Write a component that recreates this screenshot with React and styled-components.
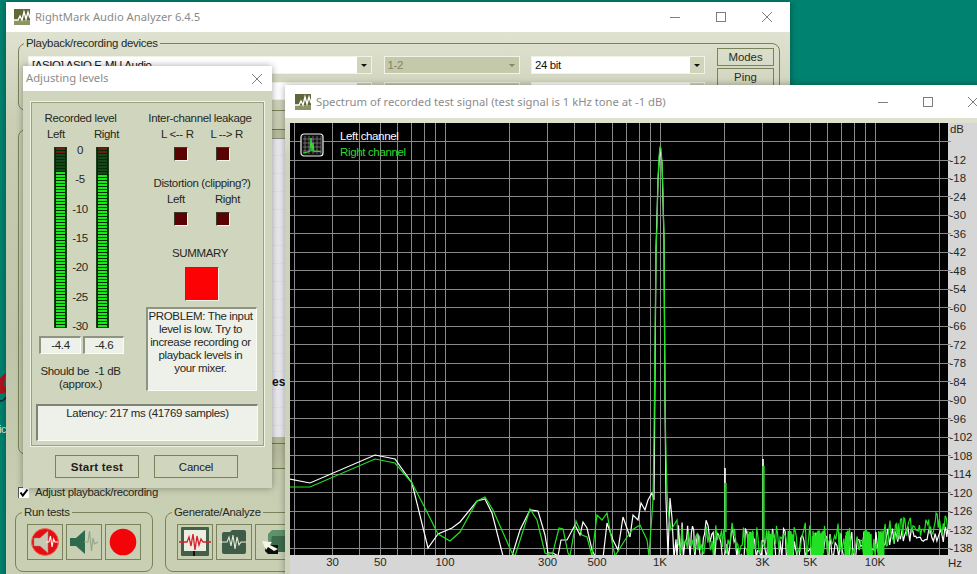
import React from "react";
import styled, { createGlobalStyle } from "styled-components";

const Global = createGlobalStyle`
  html, body { margin: 0; padding: 0; background: #008270; }
  #root { width: 977px; height: 574px; overflow: hidden; position: relative; }
  * { box-sizing: border-box; }
`;

const UI = `"Liberation Sans", Arial, sans-serif`;
const TITLE = `"Noto Sans", "Open Sans", sans-serif`;

const Desktop = styled.div`
  position: relative;
  width: 977px;
  height: 574px;
  overflow: hidden;
  background: #008270;
  font: 11.5px/13px ${UI};
  letter-spacing: -0.35px;
  color: #26281e;
`;

const DesktopGlyph = styled.svg`
  position: absolute;
  left: 0;
  top: 370px;
`;

const DesktopLabel = styled.span`
  position: absolute;
  left: -1px;
  top: 423px;
  color: #d9efe9;
  font: 11px/13px ${UI};
`;

const Window = styled.div`
  position: absolute;
  left: ${(p) => p.$x}px;
  top: ${(p) => p.$y}px;
  width: ${(p) => p.$w}px;
  height: ${(p) => p.$h}px;
  box-shadow: 0 0 7px rgba(0, 0, 0, 0.35);
  overflow: hidden;
`;

const TitleBar = styled.div`
  display: flex;
  align-items: center;
  height: ${(p) => p.$h}px;
  padding: 0 ${(p) => p.$right}px 0 ${(p) => p.$left}px;
  background: #fff;
  gap: 5px;
`;

const TitleText = styled.div`
  flex: 1;
  font: 11.25px/16px ${TITLE};
  letter-spacing: 0;
  color: #8b8b8b;
  white-space: nowrap;
  position: relative;
  top: ${(p) => p.$nudge || 0}px;
`;

const Controls = styled.div`
  display: flex;
  align-items: center;
  gap: ${(p) => p.$gap}px;
`;

const MainBody = styled.div`
  height: 570px;
  padding: 5px 0 0 12px;
  background: linear-gradient(180deg, #dfe2d0 0, #c9ceb4 90px, #bfc5a8 310px, #c9cfb3 480px, #c9cfb3 100%);
`;

const Group = styled.fieldset`
  margin: 0;
  padding: ${(p) => p.$pad || "0"};
  width: ${(p) => p.$w}px;
  height: ${(p) => p.$h}px;
  min-width: 0;
  border: 1px solid #7a8259;
  border-radius: 8px;
  flex: none;
`;

const GroupLegend = styled.legend`
  margin-left: ${(p) => p.$ml}px;
  padding: 0 2px;
  font: 11.4px/13px ${UI};
  letter-spacing: -0.27px;
  color: #26281e;
`;

const DeviceRow = styled.div`
  display: flex;
  padding-left: 9px;
`;

const ComboGrid = styled.div`
  display: grid;
  grid-template-columns: 344px 136px 174px;
  column-gap: 11.5px;
  row-gap: 8px;
  padding-top: 6px;
`;

const Combo = styled.div`
  display: flex;
  height: 18px;
  align-items: stretch;
  border: 1px solid #f1f3e6;
  background: ${(p) => (p.$disabled ? "#c3c9a9" : "#fff")};
  color: ${(p) => (p.$disabled ? "#7f8568" : "#111")};
  font: 11.4px/17px ${UI};
`;

const ComboText = styled.span`
  flex: 1;
  padding-left: 3px;
  white-space: nowrap;
  overflow: hidden;
`;

const ComboArrow = styled.span`
  width: 14px;
  background: ${(p) => (p.$disabled ? "#c3c9a9" : "#cfd4bb")};
  display: flex;
  align-items: center;
  justify-content: center;
  &::after {
    content: "";
    border-left: 3px solid transparent;
    border-right: 3px solid transparent;
    border-top: 3px solid ${(p) => (p.$disabled ? "#7f8568" : "#111")};
  }
`;

const SideButtons = styled.div`
  display: flex;
  flex-direction: column;
  gap: 2px;
  margin: -2px 0 0 12px;
  width: 57px;
`;

const SmallButton = styled.div`
  height: 18px;
  border: 1px solid #7a8259;
  text-align: center;
  font: 11.4px/16px ${UI};
  letter-spacing: 0;
  color: #2a2c20;
`;

const SecondRow = styled.div`
  display: flex;
  margin-top: 18px;
`;

const PlainGroup = styled.div`
  width: 250px;
  height: 326px;
  flex: none;
  border: 1px solid #7a8259;
  border-radius: 8px;
`;

const RightPane = styled.div`
  flex: 1;
  height: 340px;
  border-top: 1px solid #6f7750;
  padding-top: 8px;
  background: linear-gradient(180deg, #b6bc9c 0, #b6bc9c 320px, #bfc5a6 100%);
`;

const ListBox = styled.div`
  height: 299px;
  padding: 237px 0 0 4px;
  background: repeating-linear-gradient(180deg, #e9e9ee 0, #e9e9ee 17px, #dcdce0 18px);
  font: bold 12px/14px ${UI};
  letter-spacing: 0;
  color: #111;
  box-shadow: inset 0 17px 0 -16px #8e9080;
`;

const Rule = styled.div`
  height: 1px;
  margin-top: ${(p) => p.$top}px;
  background: #6f7750;
`;

const CheckRow = styled.label`
  display: flex;
  align-items: center;
  gap: 6px;
  margin-top: 17px;
  height: 13px;
  font: 11.4px/13px ${UI};
  letter-spacing: -0.3px;
`;

const CheckBox = styled.span`
  width: 11px;
  height: 11px;
  background: #fff;
  border-top: 1px solid #555;
  border-left: 1px solid #555;
  display: flex;
`;

const ToolRow = styled.div`
  display: flex;
  gap: 12px;
  margin: 7px 0 0 -3px;
`;

const IconRow = styled.div`
  display: flex;
  gap: 3px;
  padding: 5px 0 0 11px;
`;

const IconButton = styled.div`
  width: 36px;
  height: 36px;
  border: 1px solid #7a8259;
  display: flex;
  align-items: center;
  justify-content: center;
  flex: none;
`;

/* Adjusting levels */
const DialogBody = styled.div`
  height: 397px;
  padding: 10px 7px 0;
  background: #d0d6bd;
`;

const Frame = styled.div`
  height: 346px;
  border: 1px solid #f0f2e6;
  outline: 1px solid #98a080;
  outline-offset: -2px;
  padding-top: 10px;
`;

const Columns = styled.div`
  display: grid;
  grid-template-columns: 99px 1fr;
  height: 280px;
`;

const Col = styled.div`
  display: flex;
  flex-direction: column;
`;

const Center = styled.div`
  text-align: center;
  margin-top: ${(p) => p.$top || 0}px;
  margin-left: ${(p) => p.$ml || 0}px;
  white-space: nowrap;
`;

const TwoLabels = styled.div`
  display: flex;
  justify-content: space-between;
  margin-top: 3px;
  padding: 0 ${(p) => p.$r}px 0 ${(p) => p.$l}px;
  white-space: nowrap;
`;

const MeterRow = styled.div`
  display: flex;
  margin: 6px 0 0 23px;
  height: 181px;
`;

const Bar = styled.div`
  width: 13px;
  height: 181px;
  padding: 0 1px;
  background: #062806;
  display: flex;
  flex-direction: column;
  gap: 1px;
  border: 1px solid #1a3a1a;
  flex: none;
`;

const Segment = styled.i`
  display: block;
  height: 2px;
  flex: none;
  background: ${(p) => (p.$tone === "off-red" ? "#6a1f12" : p.$tone === "off" ? "#14481a" : "#14ee14")};
`;

const TickColumn = styled.div`
  width: 29px;
  height: 189px;
  margin-top: -3px;
  padding-right: 3px;
  display: flex;
  flex-direction: column;
  justify-content: space-between;
  align-items: center;
`;

const ValueRow = styled.div`
  display: flex;
  gap: 2px;
  margin: 8px 0 0 8px;
`;

const Readout = styled.div`
  width: ${(p) => p.$w}px;
  height: 18px;
  background: #eef0ea;
  border-top: 2px solid #8f9480;
  border-left: 2px solid #8f9480;
  border-right: 1px solid #fbfcf6;
  border-bottom: 1px solid #fbfcf6;
  text-align: center;
  line-height: 15px;
`;

const LedRow = styled.div`
  display: flex;
  gap: 28px;
  margin-top: 6px;
  padding-left: ${(p) => p.$l}px;
`;

const Led = styled.div`
  width: 14px;
  height: 14px;
  background: #5a0204;
  border: 1px solid #3b3b2c;
  border-right-color: #f5f6ec;
  border-bottom-color: #f5f6ec;
`;

const Summary = styled.div`
  width: 34px;
  height: 34px;
  margin: 7px 0 0 55px;
  background: #fc0205;
  border: 1px solid #4b4b38;
  border-right-color: #f5f6ec;
  border-bottom-color: #f5f6ec;
`;

const ProblemBox = styled.div`
  width: 111px;
  height: 84px;
  margin: 6px 0 0 16px;
  padding: 1px 3px 0 0;
  background: #eef0ea;
  border-top: 2px solid #8f9480;
  border-left: 2px solid #8f9480;
  border-right: 1px solid #fbfcf6;
  border-bottom: 1px solid #fbfcf6;
  text-align: center;
`;

const LatencyBox = styled.div`
  height: 37px;
  margin: 12px 6px 0 5px;
  padding-top: 1px;
  background: #eef0ea;
  border-top: 2px solid #7e8372;
  border-left: 2px solid #7e8372;
  border-right: 1px solid #fbfcf6;
  border-bottom: 1px solid #fbfcf6;
  text-align: center;
`;

const DialogButtons = styled.div`
  display: flex;
  gap: 15px;
  margin: 8px 0 0 25px;
`;

const PushButton = styled.div`
  width: 84px;
  height: 23px;
  border: 1px solid #7a8259;
  text-align: center;
  font: ${(p) => (p.$bold ? "bold 11.6px" : "normal 11.4px")}/22px ${UI};
  letter-spacing: ${(p) => (p.$bold ? "0.2px" : "-0.2px")};
  color: #1f2018;
`;

/* Spectrum */
const SpectrumBody = styled.div`
  position: relative;
  height: 500px;
  padding: 5px 0 0 5px;
  background: linear-gradient(180deg, #dfe2cf 0, #cdd3b8 40px);
`;

const ChartSvg = styled.svg`
  display: block;
`;

const ChartLegend = styled.div`
  position: absolute;
  left: 15px;
  top: 10px;
  display: flex;
  gap: 16px;
  & > svg {
    margin-top: 5px;
  }
`;

const LegendLines = styled.div`
  line-height: 16px;
`;

const LegendLine = styled.div`
  color: ${(p) => p.$color};
`;

/* icons */
const Logo = () => (
  <svg width="16" height="16" viewBox="0 0 16 16">
    <rect width="16" height="11" fill="#5f6838" />
    <rect y="11" width="16" height="5" fill="#8d9463" />
    <polyline points="0,11 4,11 6,7 8,11 10,3 12,10 14,3 16,9" fill="none" stroke="#fff" strokeWidth="1.4" />
  </svg>
);

const Glyph = ({ kind }) => (
  <svg width="10" height="10" viewBox="0 0 10 10" fill="none" stroke="#6f6f6f" strokeWidth="0.9">
    {kind === "min" && <line x1="0" y1="5.5" x2="10" y2="5.5" />}
    {kind === "max" && <rect x="0.5" y="0.5" width="9" height="9" />}
    {kind === "close" && <path d="M0 0 L10 10 M10 0 L0 10" />}
  </svg>
);

const SpeakerPlayback = () => (
  <svg width="30" height="30" viewBox="0 0 30 30">
    <circle cx="15" cy="15" r="13.5" fill="#e40f12" />
    <circle cx="15" cy="15" r="13.5" fill="none" stroke="#f46a5c" strokeWidth="1" />
    <path d="M4 11 H10 L18 4 V26 L10 19 H4 Z" fill="#c9c7b4" stroke="#8a8878" strokeWidth="0.5" />
    <polyline points="16,15 19,15 20.5,9 22,20 23.5,12 25,15 28,15" fill="none" stroke="#fff" strokeWidth="1.1" />
  </svg>
);

const SpeakerRecord = () => (
  <svg width="30" height="30" viewBox="0 0 30 30">
    <path d="M1 11 H7 L16 3 V27 L7 19 H1 Z" fill="#2f6a4c" />
    <polyline points="15,15 19,15 20.5,4 22.5,24 24,11 25.5,17 29,15" fill="none" stroke="#93a586" strokeWidth="1.1" />
  </svg>
);

const RedDot = () => (
  <svg width="30" height="30" viewBox="0 0 30 30">
    <circle cx="15" cy="15" r="13.3" fill="#f40409" />
  </svg>
);

const ScopeIcon = () => (
  <svg width="32" height="32" viewBox="0 0 32 32">
    <rect x="2" y="1" width="28" height="29" rx="1" fill="#45604a" />
    <rect x="5" y="4" width="22" height="21" fill="#eceee2" />
    <rect x="14" y="25" width="2" height="5" fill="#111" />
    <polyline points="0,16 8,16 10,11 12,20 14,8 16,24 18,10 20,19 22,13 24,16 32,16" fill="none" stroke="#d4202a" strokeWidth="1.3" />
  </svg>
);

const WaveIcon = () => (
  <svg width="30" height="30" viewBox="0 0 30 30">
    <path d="M3 7 Q3 5 5 5 H11 L13 3 H25 Q27 3 27 5 V25 Q27 27 25 27 H5 Q3 27 3 25 Z" fill="#3f5c48" />
    <polyline points="0,15 8,15 10,10 12,19 14,8 16,22 18,10 20,18 22,15 28,15" fill="none" stroke="#e6ebd8" strokeWidth="1.1" />
  </svg>
);

const FolderIcon = () => (
  <svg width="34" height="30" viewBox="0 0 34 30" style={{ flex: "none", marginLeft: 6 }}>
    <path d="M9 7 L13 3 H26 V25 H9 Z" fill="#5f9268" />
    <path d="M13 9 H26 V25 H10 Z" fill="#3e6b4d" />
    <path d="M6 18 H19 V27 H9 L6 24 Z" fill="#0e0e0a" />
    <path d="M3 14 L13 15 L11 18 L19 22 L15 24 L9 20 L7 23 Z" fill="#f4f5e8" />
  </svg>
);

const Check = () => (
  <svg width="10" height="10" viewBox="0 0 10 10">
    <path d="M1.5 4.5 L3.8 7.5 L8.5 1.5" fill="none" stroke="#000" strokeWidth="2" />
  </svg>
);

const InsetIcon = () => (
  <svg width="24" height="24" viewBox="0 0 24 24">
    <rect x="1" y="1" width="22" height="22" rx="3" fill="#111" stroke="#eee" strokeWidth="1.2" />
    <path d="M5 3V21M9 3V21M13 3V21M17 3V21M21 3V21M3 6H21M3 10H21M3 14H21M3 18H21" stroke="#888" strokeWidth="0.7" />
    <polyline points="3,20 8,19 10,18 11,5 12,18 13,10 14,19 16,18 21,19" fill="none" stroke="#3de03d" strokeWidth="1" />
  </svg>
);

/* chart data */
const fx = (f) => 445 + 215 * Math.log10(f / 100);
const dy = (d) => 160 + ((d - 12) / 6) * 18.48;

const FREQS = [];
[20, 30, 40, 50, 60, 70, 80, 90].forEach((f) => FREQS.push(f));
[100, 200, 300, 400, 500, 600, 700, 800, 900].forEach((f) => FREQS.push(f));
[1000, 2000, 3000, 4000, 5000, 6000, 7000, 8000, 9000, 10000, 20000].forEach((f) => FREQS.push(f));

const DBS = [];
for (let d = 6; d <= 138; d += 6) DBS.push(d);

const rng = (seed) => () => {
  seed = (seed + 0x6d2b79f5) | 0;
  let t = Math.imul(seed ^ (seed >>> 15), 1 | seed);
  t = (t + Math.imul(t ^ (t >>> 7), 61 | t)) ^ t;
  return ((t ^ (t >>> 14)) >>> 0) / 4294967296;
};

const lerp = (a, b, t) => a + (b - a) * Math.max(0, Math.min(1, t));

const greenNoise = () => {
  const r = rng(11);
  const pts = [];
  const patches = [[747, 753], [768, 772], [787, 793], [812, 823], [845, 849], [863, 871], [878, 884]];
  let x = 678;
  while (x < 948) {
    const patch = patches.some(([a, b]) => x >= a && x <= b);
    const top = x < 880 ? 522 : lerp(522, 510, (x - 880) / 65);
    const bottom = x < 880 ? 558 : lerp(556, 540, (x - 880) / 30);
    if (patch) {
      pts.push([x, 556], [x + 0.3, 530 + r() * 6]);
      x += 0.6;
    } else {
      const v = Math.pow(r(), 0.8);
      const y = top + (bottom - top) * (x < 880 ? v : v * 0.85);
      pts.push([x, y]);
      x += 0.8 + r() * 0.9;
    }
  }
  return pts;
};

const whiteNoise = () => {
  const r = rng(77);
  const pts = [];
  let x = 676;
  while (x < 948) {
    const top = x < 720 ? 520 : x < 880 ? 528 : 526;
    const bottom = x < 870 ? 560 : lerp(556, 542, (x - 870) / 30);
    const v = r();
    pts.push([x, x < 870 ? (v > 0.6 ? 558 : top + v * 45) : top + (bottom - top) * v]);
    x += 1 + r();
  }
  return pts;
};

const WHITE = [
  [289, 479], [310, 483], [375, 455], [395, 459], [412, 483], [428, 548], [438, 534], [452, 528], [460, 522],
  [477, 501], [485, 499], [492, 513], [503, 556], [512, 556], [520, 530], [530, 510], [538, 511], [545, 535],
  [548, 553], [553, 553], [558, 556], [561, 540], [567, 540], [575, 525], [580, 535], [583, 522], [587, 528],
  [592, 550], [596, 558], [603, 558], [607, 523], [613, 540], [618, 550], [623, 517], [630, 537], [633, 515],
  [638, 520], [641, 503], [645, 510], [648, 500], [652, 493], [654, 500], [656, 250], [658, 180], [660, 148],
  [662, 163], [664, 240], [665, 400], [666, 500], [668, 555], [670, 498], [672, 518], [674, 558],
];

const GREEN = [
  [289, 487], [310, 487], [375, 459], [395, 463], [412, 483], [425, 508], [438, 534], [450, 541], [460, 532],
  [477, 501], [485, 497], [493, 510], [512, 553], [515, 556], [530, 509], [537, 520], [545, 553], [552, 556],
  [559, 528], [563, 529], [568, 553], [570, 556], [576, 521], [582, 535], [587, 537], [592, 556], [597, 515],
  [602, 520], [607, 513], [613, 547], [615, 556], [625, 540], [632, 530], [640, 525], [647, 540], [649, 556],
  [653, 500], [654, 440], [656, 250], [657, 225], [658, 180], [659, 157], [660, 147], [661, 148], [662, 163],
  [663, 192], [664, 240], [665, 400], [666, 457], [667, 490], [668, 510], [671, 530], [674, 525], [677, 520],
];

const toPts = (arr) => arr.map(([x, y]) => `${x.toFixed(1)},${y.toFixed(1)}`).join(" ");
const WHITE_POINTS = toPts([...WHITE, ...whiteNoise()]);
const GREEN_POINTS = toPts([...GREEN, ...greenNoise()]);

const LevelMeter = ({ lit }) => (
  <Bar>
    {Array.from({ length: 60 }, (_, i) => (
      <Segment key={i} $tone={i < 2 ? "off-red" : i < lit ? "off" : "on"} />
    ))}
  </Bar>
);

const Chart = () => (
  <ChartSvg width="687" height="451" viewBox="290 123 687 451">
    <rect x="290" y="123" width="687" height="451" fill="#d6d6d6" />
    <rect x="290" y="123" width="658" height="432" fill="#000" />
    <clipPath id="plot">
      <rect x="290" y="123" width="658" height="432" />
    </clipPath>
    {FREQS.map((f) => (
      <line key={f} x1={fx(f)} x2={fx(f)} y1="123" y2="555" stroke="#8a8a8a" strokeWidth="1" shapeRendering="crispEdges" />
    ))}
    {DBS.map((d) => (
      <line key={d} x1="290" x2="951" y1={dy(d)} y2={dy(d)} stroke="#8a8a8a" strokeWidth="1" shapeRendering="crispEdges" />
    ))}
    <g clipPath="url(#plot)" fill="none">
      <polyline points={WHITE_POINTS} stroke="#fff" strokeWidth="1.2" />
      <line x1="725" x2="725" y1="468" y2="530" stroke="#fff" strokeWidth="1.6" />
      <line x1="763" x2="763" y1="459" y2="540" stroke="#fff" strokeWidth="1.6" />
      <polyline points={GREEN_POINTS} stroke="#22e022" strokeWidth="1.2" />
      <line x1="725.5" x2="725.5" y1="483" y2="532" stroke="#22d022" strokeWidth="2.4" />
      <line x1="763.5" x2="763.5" y1="466" y2="540" stroke="#22d022" strokeWidth="2.4" />
    </g>
    <g fontFamily={"'Liberation Sans', Arial, sans-serif"} fontSize="11.4" fill="#26281e" letterSpacing="0">
      <text x="950" y="133">dB</text>
      {DBS.filter((d) => d >= 12).map((d) => (
        <text key={d} x="949.5" y={dy(d) + 4}>{`-${d}`}</text>
      ))}
      {[[30, "30"], [50, "50"], [100, "100"], [300, "300"], [500, "500"], [1000, "1K"], [3000, "3K"], [5000, "5K"], [10000, "10K"]].map(([f, t]) => (
        <text key={t} x={f === 500 ? 597 : fx(f)} y="566" textAnchor="middle">{t}</text>
      ))}
      <text x="948" y="567">Hz</text>
    </g>
  </ChartSvg>
);

export default function App() {
  return (
    <Desktop>
      <Global />
      <DesktopGlyph width="7" height="36" viewBox="0 0 7 36">
        <path d="M0 8 L6 3 L4 14 L7 22 L0 24 Z" fill="#b3121d" />
        <path d="M0 31 Q4 31 6 27" fill="none" stroke="#123" strokeWidth="1.5" />
      </DesktopGlyph>
      <DesktopLabel>ic</DesktopLabel>

      <Window $x={6} $y={2} $w={784} $h={600}>
        <TitleBar $h={30} $left={8} $right={18}>
          <Logo />
          <TitleText>RightMark Audio Analyzer 6.4.5</TitleText>
          <Controls $gap={36}>
            <Glyph kind="min" />
            <Glyph kind="max" />
            <Glyph kind="close" />
          </Controls>
        </TitleBar>
        <MainBody>
          <Group $w={762} $h={74}>
            <GroupLegend $ml={5}>Playback/recording devices</GroupLegend>
            <DeviceRow>
              <ComboGrid>
                <Combo><ComboText>[ASIO] ASIO E-MU Audio</ComboText><ComboArrow /></Combo>
                <Combo $disabled><ComboText>1-2</ComboText><ComboArrow $disabled /></Combo>
                <Combo><ComboText>24 bit</ComboText><ComboArrow /></Combo>
                <Combo><ComboText /><ComboArrow /></Combo>
                <Combo $disabled><ComboText /><ComboArrow $disabled /></Combo>
                <Combo><ComboText /><ComboArrow /></Combo>
              </ComboGrid>
              <SideButtons>
                <SmallButton>Modes</SmallButton>
                <SmallButton>Ping</SmallButton>
              </SideButtons>
            </DeviceRow>
          </Group>
          <SecondRow>
            <PlainGroup />
            <RightPane>
              <ListBox>es</ListBox>
              <Rule $top={6} />
              <Rule $top={24} />
            </RightPane>
          </SecondRow>
          <CheckRow>
            <CheckBox><Check /></CheckBox>
            Adjust playback/recording
          </CheckRow>
          <ToolRow>
            <Group $w={138} $h={66}>
              <GroupLegend $ml={6}>Run tests</GroupLegend>
              <IconRow>
                <IconButton><SpeakerPlayback /></IconButton>
                <IconButton><SpeakerRecord /></IconButton>
                <IconButton><RedDot /></IconButton>
              </IconRow>
            </Group>
            <Group $w={300} $h={66}>
              <GroupLegend $ml={6}>Generate/Analyze</GroupLegend>
              <IconRow>
                <IconButton><ScopeIcon /></IconButton>
                <IconButton><WaveIcon /></IconButton>
                <IconButton><FolderIcon /></IconButton>
              </IconRow>
            </Group>
          </ToolRow>
        </MainBody>
      </Window>

      <Window $x={23} $y={66} $w={249} $h={422}>
        <TitleBar $h={25} $left={3} $right={10}>
          <TitleText $nudge={-1}>Adjusting levels</TitleText>
          <Glyph kind="close" />
        </TitleBar>
        <DialogBody>
          <Frame>
            <Columns>
              <Col>
                <Center>Recorded level</Center>
                <TwoLabels $l={16} $r={11}><span>Left</span><span>Right</span></TwoLabels>
                <MeterRow>
                  <LevelMeter lit={8} />
                  <TickColumn>
                    {["0", "-5", "-10", "-15", "-20", "-25", "-30"].map((t) => (
                      <span key={t}>{t}</span>
                    ))}
                  </TickColumn>
                  <LevelMeter lit={9} />
                </MeterRow>
                <ValueRow>
                  <Readout $w={42}>-4.4</Readout>
                  <Readout $w={41}>-4.6</Readout>
                </ValueRow>
                <Center $top={11}>Should be&nbsp; -1 dB</Center>
                <Center>(approx.)</Center>
              </Col>
              <Col>
                <Center $ml={6}>Inter-channel leakage</Center>
                <TwoLabels $l={31} $r={21}><span>L &lt;-- R</span><span>L --&gt; R</span></TwoLabels>
                <LedRow $l={44}><Led /><Led /></LedRow>
                <Center $top={16} $ml={10}>Distortion (clipping?)</Center>
                <TwoLabels $l={37} $r={24}><span>Left</span><span>Right</span></TwoLabels>
                <LedRow $l={44}><Led /><Led /></LedRow>
                <Center $top={21} $ml={6}>SUMMARY</Center>
                <Summary />
                <ProblemBox>PROBLEM: The input level is low. Try to increase recording or playback levels in your mixer.</ProblemBox>
              </Col>
            </Columns>
            <LatencyBox>Latency: 217 ms (41769 samples)</LatencyBox>
          </Frame>
          <DialogButtons>
            <PushButton $bold>Start test</PushButton>
            <PushButton>Cancel</PushButton>
          </DialogButtons>
        </DialogBody>
      </Window>

      <Window $x={285} $y={85} $w={711} $h={520}>
        <TitleBar $h={33} $left={10} $right={18}>
          <Logo />
          <TitleText>Spectrum of recorded test signal (test signal is 1 kHz tone at -1 dB)</TitleText>
          <Controls $gap={35}>
            <Glyph kind="min" />
            <Glyph kind="max" />
            <Glyph kind="close" />
          </Controls>
        </TitleBar>
        <SpectrumBody>
          <Chart />
          <ChartLegend>
            <InsetIcon />
            <LegendLines>
              <LegendLine $color="#fff">Left channel</LegendLine>
              <LegendLine $color="#2fd82f">Right channel</LegendLine>
            </LegendLines>
          </ChartLegend>
        </SpectrumBody>
      </Window>
    </Desktop>
  );
}
